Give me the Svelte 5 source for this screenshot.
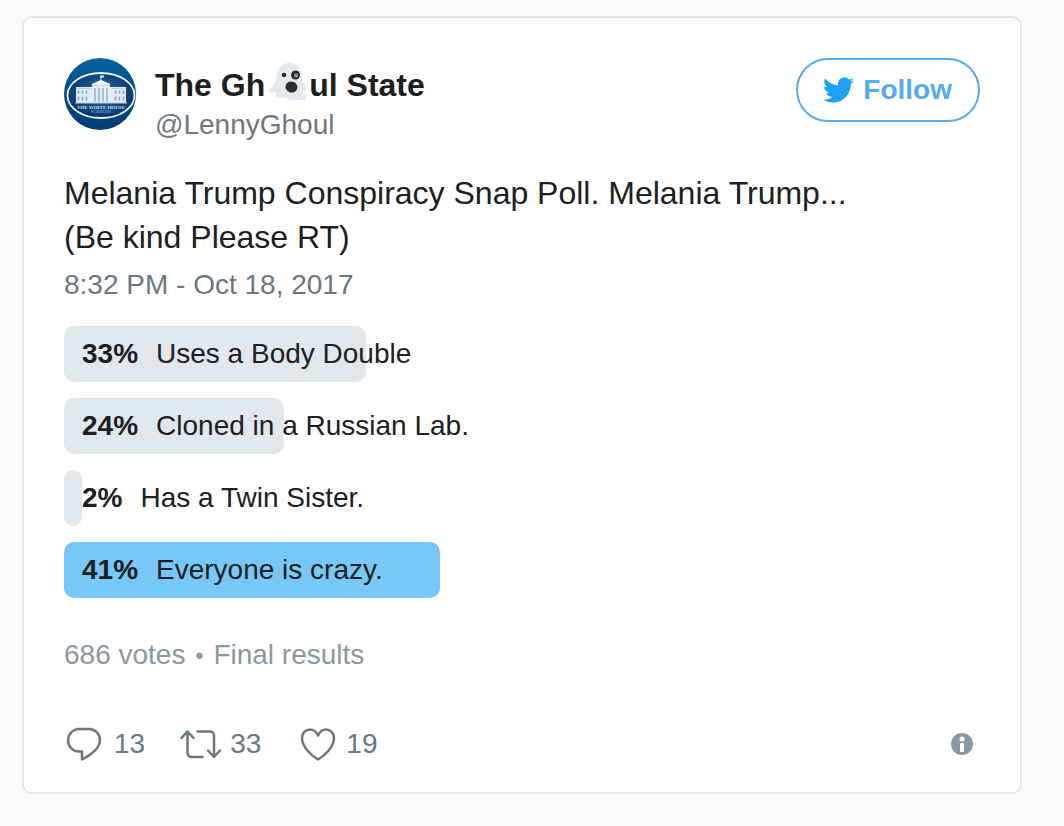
<script>
  const options = [
    { percent: 33, label: 'Uses a Body Double' },
    { percent: 24, label: 'Cloned in a Russian Lab.' },
    { percent: 2, label: 'Has a Twin Sister.' },
    { percent: 41, label: 'Everyone is crazy.' }
  ];
  const top = Math.max(...options.map((o) => o.percent));
  const columns = [31, 35, 39, 43];
</script>

<article class="card">
  <header>
    <a class="author" href="#profile">
      <svg class="avatar" viewBox="0 0 72 72" aria-hidden="true">
        <defs>
          <linearGradient id="sky" x1="0" y1="0" x2="0" y2="1">
            <stop offset="0" stop-color="#03629b" />
            <stop offset="1" stop-color="#013a72" />
          </linearGradient>
          <radialGradient id="seal" cx=".5" cy=".45" r=".6">
            <stop offset="0" stop-color="#2c6ca6" />
            <stop offset="1" stop-color="#062f66" />
          </radialGradient>
          <clipPath id="round"><circle cx="36" cy="36" r="36" /></clipPath>
        </defs>
        <g clip-path="url(#round)">
          <rect width="72" height="72" fill="url(#sky)" />
          <ellipse cx="37" cy="37.500" rx="33.500" ry="22.500" fill="url(#seal)" stroke="#e6f1f8" stroke-width="1.800" />
          <path d="M12 29h16v-3l9-4 9 4v3h16v16H12z" fill="#e3ebf5" />
          <path d="M27 26.500l10-4.500 10 4.500z" fill="#f7fafc" />
          <path d="M37 22v-4.500" stroke="#dce8f2" />
          <path d="M36 17.500h4v2h-4z" fill="#dce8f2" />
          <path d="M12 30.500h15M47 30.500h15M28 27.500h18" stroke="#b9cbdf" stroke-width=".8" />
          {#each [14.5, 18.5, 22.5, 51.5, 55.5, 59.5] as x}
            <path d="M{x} 32.500v3.500M{x} 38.500v4" stroke="#83a3c8" stroke-width="1.500" />
          {/each}
          {#each columns as x}
            <path d="M{x} 30v13.500" stroke="#89a7ca" stroke-width="1.300" />
          {/each}
          <path d="M11 44.500h52v1H11z" fill="#b4c8dc" />
          <text x="37" y="51" text-anchor="middle" class="seal-name">THE WHITE HOUSE</text>
          <text x="37" y="55" text-anchor="middle" class="seal-place">WASHINGTON</text>
        </g>
      </svg>
      <span class="names">
        <strong>The Gh<svg class="ghost" viewBox="0 0 40 40" role="img" aria-label="Ghost">
            <path d="M20 0c-7 0-11 5-12 12-.5 4-1 7-3 9-2 3-5.500 6-4.500 8 1 1.500 5 .5 7-1-1 3-1 5 1 6 2 1.500 5 0 7 .5 3 1 5 3 9 3 3 0 4-1 7-.5 3 .5 5.500-.5 5.500-2 0-2-3-3.500-3.500-7 2 1 4-.5 4-2 .5-3-3-5-4-8-1-3 0-6-1-9C31 3 26 0 20 0z" fill="#e3e9ee" />
            <circle cx="15" cy="12" r="2.300" fill="#292f33" />
            <circle cx="26.500" cy="12" r="4.500" fill="#292f33" />
            <circle cx="27" cy="12.500" r="2" fill="#8899a6" />
            <ellipse cx="22.500" cy="24" rx="6" ry="5.500" fill="#292f33" transform="rotate(25 22.500 24)" />
            <path d="M37.500 9c2.500 1 2.500 3 .5 5" fill="none" stroke="#e1e8ed" />
          </svg>ul State</strong>
        <span class="handle">@LennyGhoul</span>
      </span>
    </a>
    <button class="follow" type="button">
      <svg class="bird" viewBox="0 2 24 20" aria-hidden="true">
        <path fill="currentColor" d="M23.954 4.569a10 10 0 0 1-2.825.775 4.958 4.958 0 0 0 2.163-2.723c-.951.555-2.005.959-3.127 1.184a4.920 4.920 0 0 0-8.384 4.482C7.691 8.094 4.066 6.130 1.640 3.161a4.822 4.822 0 0 0-.666 2.475c0 1.710.870 3.213 2.188 4.096a4.904 4.904 0 0 1-2.228-.616v.061a4.923 4.923 0 0 0 3.946 4.827 4.996 4.996 0 0 1-2.212.085 4.937 4.937 0 0 0 4.604 3.417 9.868 9.868 0 0 1-6.102 2.105c-.390 0-.779-.023-1.170-.067a13.995 13.995 0 0 0 7.557 2.209c9.054 0 13.999-7.496 13.999-13.986 0-.209 0-.420-.015-.630a9.936 9.936 0 0 0 2.460-2.548z" />
      </svg>
      Follow
    </button>
  </header>

  <p class="message">Melania Trump Conspiracy Snap Poll. Melania Trump...<br />(Be kind Please RT)</p>
  <time datetime="2017-10-18T20:32">8:32 PM - Oct 18, 2017</time>

  <ul class="poll">
    {#each options as option}
      <li>
        <span class="bar" class:winner={option.percent === top} style="width: {option.percent}%"></span>
        <strong>{option.percent}%</strong>
        <span class="label">{option.label}</span>
      </li>
    {/each}
  </ul>
  <p class="votes">686 votes <span class="dot">•</span> Final results</p>

  <footer>
    <button class="action" type="button" aria-label="Reply, 13">
      <svg width="40" height="40" viewBox="0 0 40 40" aria-hidden="true">
        <path d="M15.500 5h9c6.500 0 11.500 4.500 11.500 11 0 8-7.500 14-18 19.500V27.500h-3C8.500 27.500 4 22.500 4 16.500S8.500 5 15.500 5z" />
      </svg>
      <span>13</span>
    </button>
    <button class="action" type="button" aria-label="Retweet, 33">
      <svg width="40" height="40" viewBox="0 0 40 40" aria-hidden="true">
        <path d="M1.500 14l6-6.500 6 6.500M7.500 8v20.500q0 4.500 4.500 4.500h10.500M17.500 7.500h12q4.500 0 4.500 4.500v20.500M28 26.500l6 6.500 6-6.500" />
      </svg>
      <span>33</span>
    </button>
    <button class="action" type="button" aria-label="Like, 19">
      <svg width="40" height="40" viewBox="0 0 40 40" aria-hidden="true">
        <path d="M22 35.500C15 31.500 6 22.500 6 14c0-5 3.500-8.500 8-8.500 3.500 0 6.500 2.500 8 6 1.500-3.500 4.500-6 8-6 4.500 0 8 3.500 8 8.500 0 8.500-9 17.500-16 21.500z" />
      </svg>
      <span>19</span>
    </button>
    <a class="info" href="#ads" aria-label="Ads info and privacy">
      <svg width="22" height="22" viewBox="0 0 22 22" aria-hidden="true">
        <circle cx="11" cy="11" r="11" fill="#8899a6" />
        <circle cx="11" cy="6" r="2.500" fill="#fff" />
        <rect x="9" y="10" width="4" height="9" rx="1" fill="#fff" />
      </svg>
    </a>
  </footer>
</article>

<style>
  :global(body) {
    background: #fafafa;
  }
  .card {
    margin: 16px 42px 32px 22px;
    padding: 40px 40px 28px;
    border: 2px solid #e1e8ed;
    border-radius: 10px;
    background: #fff;
    color: #1c2022;
    font: 28px/36px "Liberation Sans", Arial, sans-serif;
  }
  header {
    display: flex;
    justify-content: space-between;
    align-items: flex-start;
  }
  a {
    color: inherit;
    text-decoration: none;
  }
  .author {
    display: flex;
    gap: 19px;
  }
  .avatar {
    width: 72px;
    height: 72px;
  }
  .seal-name {
    font: bold 5px "Liberation Serif", serif;
    fill: #cfdfed;
  }
  .seal-place {
    font: 3px "Liberation Serif", serif;
    fill: #9dbbd6;
  }
  .names {
    display: flex;
    flex-direction: column;
    gap: 2px;
    padding-top: 7px;
  }
  .names strong {
    display: flex;
    font-size: 32px;
    line-height: 40px;
    white-space: pre;
  }
  .ghost {
    width: 40px;
    height: 40px;
    margin: -2px 0 0 4px;
  }
  .handle {
    color: #697882;
  }
  .follow {
    display: flex;
    align-items: center;
    gap: 9px;
    height: 64px;
    padding: 0 26px 0 25px;
    border: 2px solid #55acee;
    border-radius: 32px;
    background: #fff;
    color: #55acee;
    font: bold 28px/36px "Liberation Sans", Arial, sans-serif;
  }
  .bird {
    width: 31px;
    height: 26px;
    color: #1da1f2;
  }
  p {
    margin: 0;
  }
  .message {
    margin-top: 28px;
    font-size: 32px;
    line-height: 44px;
  }
  time {
    display: block;
    margin-top: 8px;
    color: #697882;
  }
  .poll {
    display: grid;
    gap: 16px;
    margin: 23px 0 0;
    padding: 0;
    list-style: none;
  }
  .poll li {
    position: relative;
    display: flex;
    align-items: center;
    gap: 18px;
    height: 56px;
    padding-left: 18px;
  }
  .bar {
    position: absolute;
    inset: 0 auto 0 0;
    border-radius: 10px;
    background: #e1e8ed;
  }
  .bar.winner {
    background: #77c7f7;
  }
  .poll strong,
  .label {
    position: relative;
  }
  .votes {
    margin-top: 39px;
    color: #8899a6;
  }
  .dot {
    margin: 0 2px;
    font-size: 24px;
  }
  footer {
    display: flex;
    align-items: center;
    gap: 35px;
    margin-top: 50px;
  }
  .action {
    display: flex;
    align-items: center;
    gap: 10px;
    padding: 0;
    border: 0;
    background: none;
    color: #697882;
    font: 28px/36px "Liberation Sans", Arial, sans-serif;
  }
  .action svg {
    overflow: visible;
  }
  .action path {
    fill: none;
    stroke: #697882;
    stroke-width: 2.5;
    stroke-linecap: round;
    stroke-linejoin: round;
  }
  .info {
    display: flex;
    margin-left: auto;
    padding-right: 7px;
  }
</style>
